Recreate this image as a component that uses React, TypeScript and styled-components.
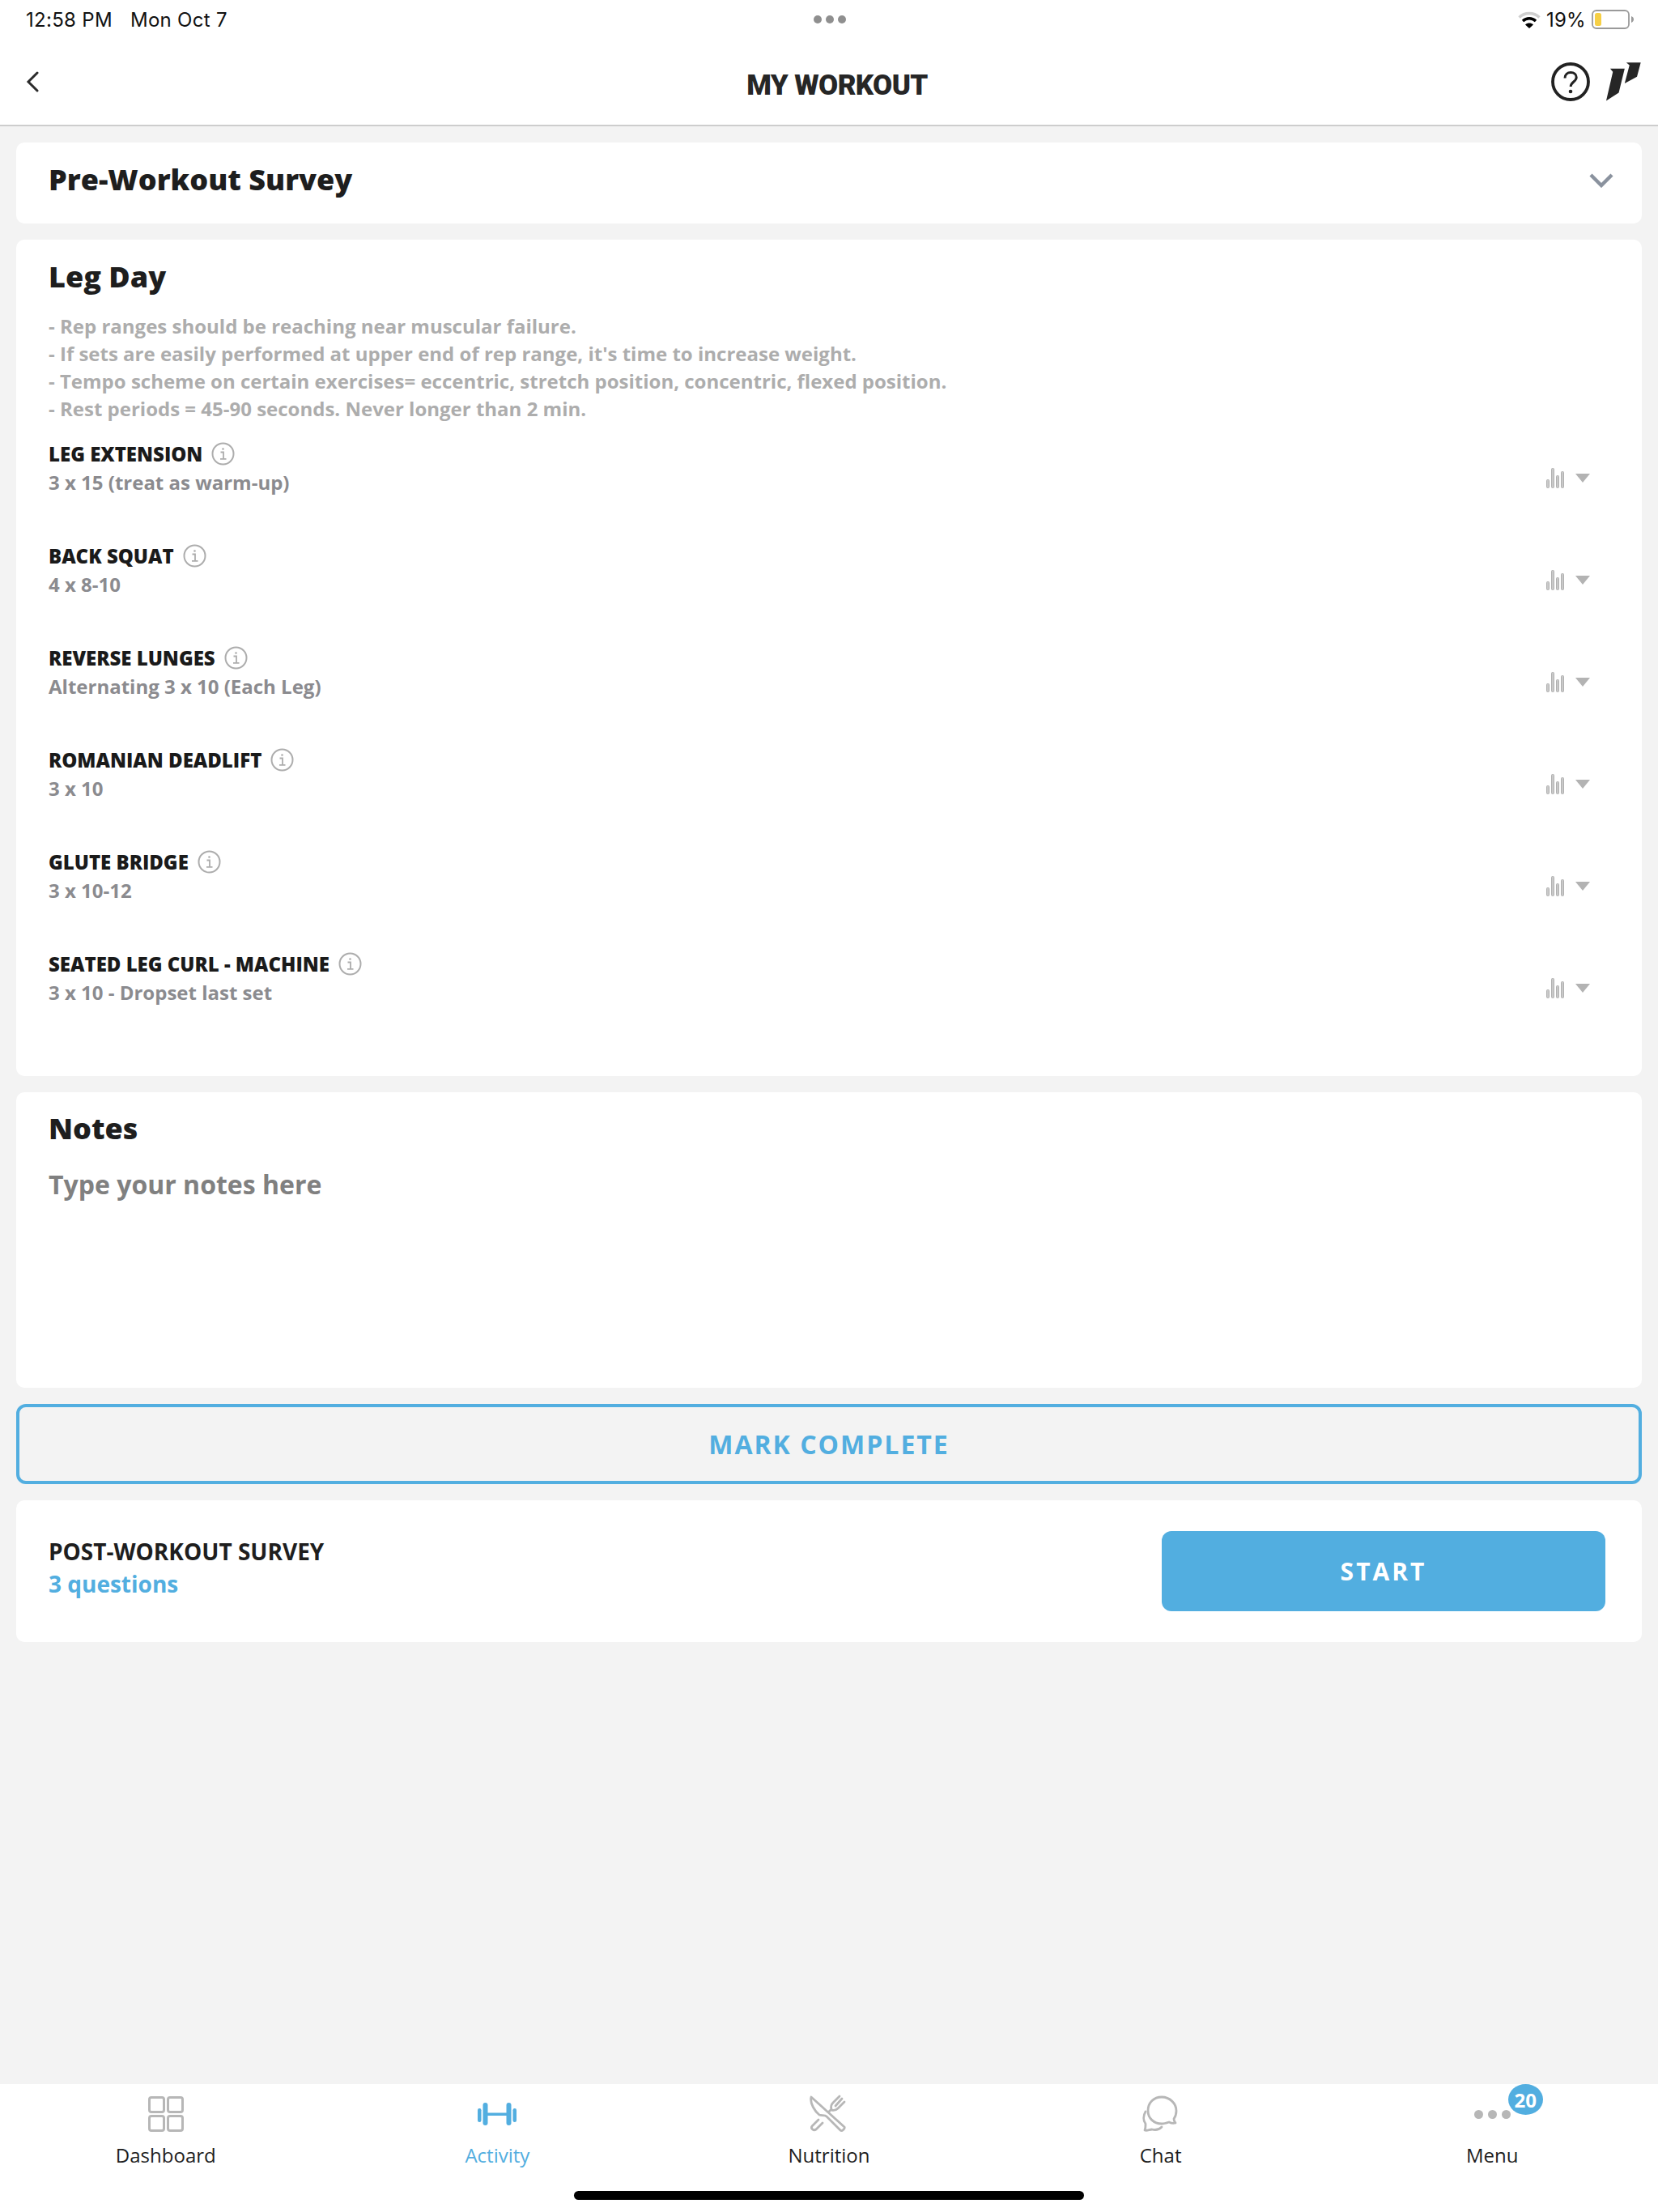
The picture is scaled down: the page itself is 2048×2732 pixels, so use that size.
import React from "react"
import styled, { createGlobalStyle } from "styled-components"

const BLUE = "#52aee0"
const ICON_GREY = "#b7b7b7"

const GlobalStyle = createGlobalStyle`
    html, body {
        margin: 0;
        padding: 0;
        background: #f3f3f3;
    }
    * {
        box-sizing: border-box;
    }
    body {
        font-family: "Open Sans", "Liberation Sans", sans-serif;
        color: #1e1e1e;
    }
`

const exercises = [
    { name: "LEG EXTENSION", scheme: "3 x 15 (treat as warm-up)" },
    { name: "BACK SQUAT", scheme: "4 x 8-10" },
    { name: "REVERSE LUNGES", scheme: "Alternating 3 x 10 (Each Leg)" },
    { name: "ROMANIAN DEADLIFT", scheme: "3 x 10" },
    { name: "GLUTE BRIDGE", scheme: "3 x 10-12" },
    { name: "SEATED LEG CURL - MACHINE", scheme: "3 x 10 - Dropset last set" },
]

const InfoIcon = () => (
    <svg width="29" height="29" viewBox="0 0 29 29" fill="none" stroke="#adadad" strokeWidth="2">
        <circle cx="14.5" cy="14.5" r="13" />
        <circle cx="14.5" cy="8.5" r="1.3" fill="#adadad" stroke="none" />
        <path d="M11.5 12.5h3.5v8M11 20.8h7.5" strokeWidth="1.8" />
    </svg>
)

const BarsIcon = () => (
    <svg width="22" height="25" viewBox="0 0 22 25" fill="#c9c9c9" stroke="#b0b0b0" strokeWidth="1">
        <rect x="0.5" y="14.5" width="3" height="10" rx="1" />
        <rect x="6.5" y="0.5" width="3" height="24" rx="1" />
        <rect x="12.5" y="9.5" width="3" height="15" rx="1" />
        <rect x="18.5" y="4.5" width="3" height="20" rx="1" />
    </svg>
)

const Caret = () => (
    <svg width="18" height="11" viewBox="0 0 18 11" fill="#b3b3b3">
        <path d="M0 0h18l-9 11z" />
    </svg>
)

const WifiIcon = () => (
    <svg width="28" height="21" viewBox="0 0 28 21" fill="none" strokeWidth="3.4">
        <path d="M1.5 7.5C8.5 .8 19.5 .8 26.5 7.5" stroke="#cfcfcf" />
        <path d="M6 12c4.600-4.400 11.400-4.400 16 0" stroke="#000" />
        <path d="M14 21l-5-4.600c2.800-2.400 7.200-2.400 10 0z" fill="#000" />
    </svg>
)

const BatteryIcon = () => (
    <svg width="52" height="24" viewBox="0 0 52 24">
        <rect x="1" y="1" width="45" height="22" rx="5" fill="#fff" stroke="#9a9a9a" strokeWidth="1.8" />
        <rect x="4" y="4" width="8" height="16" rx="2.500" fill="#f6cf45" />
        <path d="M49 8c2 .8 3 2.200 3 4s-1 3.200-3 4z" fill="#9a9a9a" />
    </svg>
)

const HelpIcon = () => (
    <svg width="48" height="48" viewBox="0 0 48 48" fill="none" stroke="#222" strokeWidth="3.8">
        <circle cx="24" cy="24" r="22" />
        <path d="M17 19.500c0-4.300 3.200-7 7.200-7s7 2.500 7 6c0 5.500-7 5.500-7 11.500" strokeWidth="3" />
        <circle cx="24" cy="36" r="2.300" fill="#222" stroke="none" />
    </svg>
)

const Logo = () => (
    <svg width="45" height="50" viewBox="850 232 136 150" fill="#262626">
        <path d="M868 258h54l-22 90-47 30 25-108z" />
        <path d="M928 235h54l-14 53-46 25 18-68z" />
    </svg>
)

const BackChevron = () => (
    <svg width="16" height="26" viewBox="0 0 16 26" fill="none" stroke="#2b2b2b" strokeWidth="3" strokeLinecap="round">
        <path d="M14 2L3 13l11 11" />
    </svg>
)

const ChevronDown = () => (
    <svg width="30" height="19" viewBox="0 0 30 19" fill="none" stroke="#8a929e" strokeWidth="4.400">
        <path d="M2 3l13 13L28 3" />
    </svg>
)

const DashboardIcon = () => (
    <svg width="44" height="44" viewBox="0 0 44 44" fill="none" stroke={ICON_GREY} strokeWidth="3">
        <rect x="1.500" y="1.500" width="18" height="18" rx="2.500" />
        <rect x="24.500" y="1.500" width="18" height="18" rx="2.500" />
        <rect x="1.500" y="24.500" width="18" height="18" rx="2.500" />
        <rect x="24.500" y="24.500" width="18" height="18" rx="2.500" />
    </svg>
)

const DumbbellIcon = () => (
    <svg width="48" height="44" viewBox="0 0 48 44" fill={BLUE}>
        <rect x="0" y="15" width="4.500" height="17" rx="2.200" />
        <rect x="6.500" y="8" width="6" height="28" rx="3" />
        <rect x="35.500" y="8" width="6" height="28" rx="3" />
        <rect x="43.500" y="15" width="4.500" height="17" rx="2.200" />
        <rect x="12" y="20.500" width="24" height="3.500" />
    </svg>
)

const NutritionIcon = () => (
    <svg width="50" height="48" viewBox="19 7 50 48" fill="none" stroke={ICON_GREY} strokeWidth="2.800" strokeLinejoin="round" strokeLinecap="round">
        <path d="M22 10L63 47c1 2-3 6-5 4L41 34c-2-2-6-1-9-2C27 28 20 18 22 10z" />
        <path d="M31 38l-8 8c-2 3 2 6 5 4l8-8" />
        <path d="M57 9l-8 8c-2 2-3 5-2 8M63 16l-8 8c-2 2-5 3-8 2M60 12l-8 9M47 25l-3 3" />
    </svg>
)

const ChatIcon = () => (
    <svg width="45" height="46" viewBox="11 8 45 46" fill="none" stroke={ICON_GREY} strokeWidth="2.800" strokeLinejoin="round" strokeLinecap="round">
        <path d="M35 10c10 0 18 8 18 17 0 4-1 7-3 10 0 2 1 4 2 5-3 1-6 0-8-1-3 1-6 2-9 2-10 0-17-7-17-16 0-10 7-17 17-17z" />
        <path d="M15 28c-3 5-3 11 0 15 0 3 0 6-1 8 3 1 6-1 9-1 4 1 9 0 12-3" />
    </svg>
)

const App: React.FC = () => {
    return (
        <Page>
            <GlobalStyle />
            <StatusBar>
                <StatusLeft>
                    <span>12:58 PM</span>
                    <span>Mon Oct 7</span>
                </StatusLeft>
                <StatusDots>
                    <i />
                    <i />
                    <i />
                </StatusDots>
                <StatusRight>
                    <WifiIcon />
                    <span>19%</span>
                    <BatteryIcon />
                </StatusRight>
            </StatusBar>

            <Header>
                <BackButton>
                    <BackChevron />
                </BackButton>
                <HeaderTitle>MY WORKOUT</HeaderTitle>
                <HeaderActions>
                    <HelpIcon />
                    <Logo />
                </HeaderActions>
            </Header>

            <Content>
                <SurveyCard>
                    <CardTitle>Pre-Workout Survey</CardTitle>
                    <ChevronDown />
                </SurveyCard>

                <WorkoutCard>
                    <CardTitle>Leg Day</CardTitle>
                    <Description>
                        <div>- Rep ranges should be reaching near muscular failure.</div>
                        <div>- If sets are easily performed at upper end of rep range, it's time to increase weight.</div>
                        <div>- Tempo scheme on certain exercises= eccentric, stretch position, concentric, flexed position.</div>
                        <div>- Rest periods = 45-90 seconds. Never longer than 2 min.</div>
                    </Description>
                    <ExerciseList>
                        {exercises.map((exercise) => (
                            <ExerciseRow key={exercise.name}>
                                <div>
                                    <ExerciseName>
                                        {exercise.name}
                                        <InfoIcon />
                                    </ExerciseName>
                                    <ExerciseScheme>{exercise.scheme}</ExerciseScheme>
                                </div>
                                <ExerciseActions>
                                    <BarsIcon />
                                    <Caret />
                                </ExerciseActions>
                            </ExerciseRow>
                        ))}
                    </ExerciseList>
                </WorkoutCard>

                <NotesCard>
                    <CardTitle>Notes</CardTitle>
                    <NotesPlaceholder>Type your notes here</NotesPlaceholder>
                </NotesCard>

                <CompleteButton>MARK COMPLETE</CompleteButton>

                <PostSurveyCard>
                    <PostSurveyText>
                        <PostSurveyTitle>POST-WORKOUT SURVEY</PostSurveyTitle>
                        <PostSurveyCount>3 questions</PostSurveyCount>
                    </PostSurveyText>
                    <StartButton>START</StartButton>
                </PostSurveyCard>
            </Content>

            <TabBar>
                <Tabs>
                    <Tab>
                        <TabIcon><DashboardIcon /></TabIcon>
                        <TabLabel>Dashboard</TabLabel>
                    </Tab>
                    <Tab>
                        <TabIcon><DumbbellIcon /></TabIcon>
                        <TabLabel $active>Activity</TabLabel>
                    </Tab>
                    <Tab>
                        <TabIcon><NutritionIcon /></TabIcon>
                        <TabLabel>Nutrition</TabLabel>
                    </Tab>
                    <Tab>
                        <TabIcon><ChatIcon /></TabIcon>
                        <TabLabel>Chat</TabLabel>
                    </Tab>
                    <Tab>
                        <TabIcon>
                            <MenuDots>
                                <i />
                                <i />
                                <i />
                            </MenuDots>
                            <Badge>20</Badge>
                        </TabIcon>
                        <TabLabel>Menu</TabLabel>
                    </Tab>
                </Tabs>
                <HomeBar />
            </TabBar>
        </Page>
    )
}

const Page = styled.div`
    display: flex;
    flex-direction: column;
    width: 2048px;
    height: 2732px;
    overflow: hidden;
    background: #f3f3f3;
`

const StatusBar = styled.div`
    display: grid;
    grid-template-columns: 1fr auto 1fr;
    align-items: center;
    height: 48px;
    padding: 0 30px 0 32px;
    background: #fff;
    font-family: "Inter", "Liberation Sans", sans-serif;
    font-size: 24px;
    letter-spacing: 0.3px;
    color: #111;
`

const StatusLeft = styled.div`
    display: flex;
    gap: 22px;
`

const StatusDots = styled.div`
    display: flex;
    gap: 5px;

    i {
        width: 10px;
        height: 10px;
        border-radius: 50%;
        background: #8f8f8f;
    }
`

const StatusRight = styled.div`
    display: flex;
    justify-content: flex-end;
    align-items: center;
    gap: 7px;
`

const Header = styled.div`
    display: grid;
    grid-template-columns: 1fr auto 1fr;
    align-items: center;
    height: 108px;
    padding: 0 20px 0 32px;
    background: #fff;
    border-bottom: 2px solid #cdcdcd;
`

const BackButton = styled.div`
    display: flex;
    align-items: center;
    height: 100%;
`

const HeaderTitle = styled.div`
    font-family: "Roboto", "Liberation Sans", sans-serif;
    font-size: 35px;
    font-weight: 900;
    letter-spacing: -0.6px;
    color: #262626;
    padding-left: 8px;
    padding-top: 8px;
`

const HeaderActions = styled.div`
    display: flex;
    justify-content: flex-end;
    align-items: center;
    gap: 19px;
`

const Content = styled.div`
    flex: 1;
    display: flex;
    flex-direction: column;
    gap: 20px;
    padding: 20px 20px 0;
`

const Card = styled.div`
    background: #fff;
    border-radius: 10px;
`

const SurveyCard = styled(Card)`
    display: flex;
    justify-content: space-between;
    align-items: center;
    height: 100px;
    padding: 0 35px 8px 40px;
`

const CardTitle = styled.div`
    font-size: 36px;
    line-height: 48px;
    font-weight: 800;
    color: #1e1e1e;
`

const WorkoutCard = styled(Card)`
    height: 1033px;
    padding: 22px 40px 0;
`

const Description = styled.div`
    margin-top: 20px;
    font-size: 24px;
    line-height: 34px;
    font-weight: 700;
    color: #adadad;
`

const ExerciseList = styled.div`
    display: flex;
    flex-direction: column;
    margin-top: 20px;
`

const ExerciseRow = styled.div`
    display: flex;
    justify-content: space-between;
    align-items: flex-start;
    height: 126px;
    padding-right: 24px;
`

const ExerciseName = styled.div`
    display: flex;
    align-items: center;
    gap: 11px;
    height: 36px;
    font-size: 24px;
    font-weight: 800;
    color: #1a1a1a;
`

const ExerciseScheme = styled.div`
    height: 35px;
    font-size: 24px;
    line-height: 35px;
    font-weight: 700;
    color: #8b8b8f;
`

const ExerciseActions = styled.div`
    display: flex;
    align-items: center;
    gap: 14px;
    margin-top: 36px;
`

const NotesCard = styled(Card)`
    height: 365px;
    padding: 21px 40px 0;
`

const NotesPlaceholder = styled.div`
    margin-top: 23px;
    font-size: 32px;
    line-height: 44px;
    font-weight: 700;
    color: #808080;
`

const CompleteButton = styled.div`
    display: flex;
    justify-content: center;
    align-items: center;
    height: 99px;
    border: 4px solid ${BLUE};
    border-radius: 12px;
    font-size: 32px;
    font-weight: 700;
    letter-spacing: 2px;
    color: ${BLUE};
`

const PostSurveyCard = styled(Card)`
    display: flex;
    justify-content: space-between;
    align-items: center;
    height: 175px;
    padding: 0 45px 0 40px;
`

const PostSurveyText = styled.div`
    padding-bottom: 10px;
`

const PostSurveyTitle = styled.div`
    font-size: 28px;
    line-height: 40px;
    font-weight: 700;
    color: #1e1e1e;
`

const PostSurveyCount = styled.div`
    font-size: 28px;
    line-height: 40px;
    font-weight: 700;
    color: ${BLUE};
`

const StartButton = styled.div`
    display: flex;
    justify-content: center;
    align-items: center;
    width: 548px;
    height: 99px;
    border-radius: 12px;
    background: ${BLUE};
    font-size: 30px;
    font-weight: 700;
    letter-spacing: 3px;
    color: #fff;
`

const TabBar = styled.div`
    display: flex;
    flex-direction: column;
    align-items: center;
    height: 158px;
    background: #fff;
`

const Tabs = styled.div`
    display: grid;
    grid-template-columns: repeat(5, 1fr);
    width: 100%;
    height: 132px;
`

const Tab = styled.div`
    display: flex;
    flex-direction: column;
    align-items: center;
    padding-top: 13px;
`

const TabIcon = styled.div`
    position: relative;
    display: flex;
    justify-content: center;
    align-items: center;
    height: 48px;
`

const TabLabel = styled.div<{ $active?: boolean }>`
    margin-top: 9px;
    font-size: 24px;
    line-height: 36px;
    color: ${(p) => (p.$active ? BLUE : "#1e1e1e")};
`

const MenuDots = styled.div`
    display: flex;
    gap: 6px;

    i {
        width: 11px;
        height: 11px;
        border-radius: 50%;
        background: ${ICON_GREY};
    }
`

const Badge = styled.div`
    position: absolute;
    top: -13px;
    left: 42px;
    display: flex;
    justify-content: center;
    align-items: center;
    width: 43px;
    height: 38px;
    border-radius: 50%;
    background: ${BLUE};
    font-size: 24px;
    font-weight: 700;
    color: #fff;
`

const HomeBar = styled.div`
    width: 630px;
    height: 11px;
    border-radius: 6px;
    background: #000;
`

export default App
